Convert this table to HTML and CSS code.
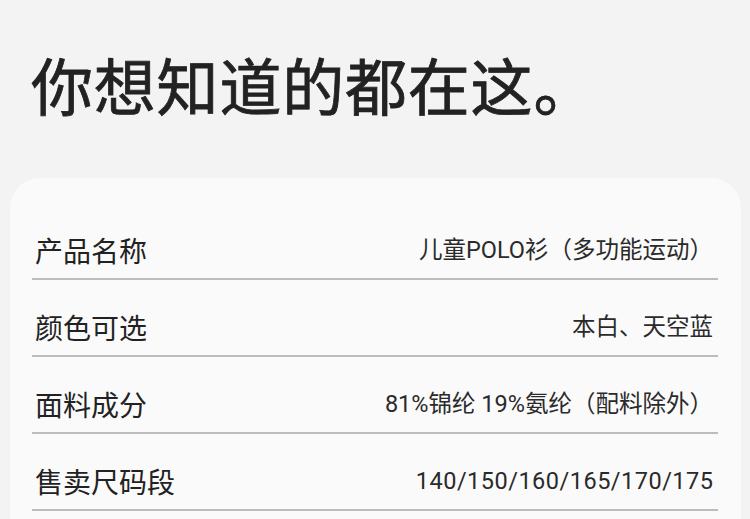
FILE: index.html
```html
<!DOCTYPE html>
<html lang="zh-CN">
<head>
<meta charset="utf-8">
<link rel="stylesheet" href="styles.css">
</head>
<body>
<main class="page">
  <h1 class="title">你想知道的都在这。</h1>
  <section class="card">
    <div class="row"><span class="label">产品名称</span><span class="value">儿童POLO衫（多功能运动）</span></div>
    <div class="row"><span class="label">颜色可选</span><span class="value">本白、天空蓝</span></div>
    <div class="row"><span class="label">面料成分</span><span class="value">81%锦纶 19%氨纶（配料除外）</span></div>
    <div class="row"><span class="label">售卖尺码段</span><span class="value value-num">140/150/160/165/170/175</span></div>
  </section>
</main>
</body>
</html>
```

FILE: styles.css
```css
html, body {
  margin: 0;
  padding: 0;
  background: #f3f3f3;
}
body {
  font-family: "Noto Sans", "Noto Sans CJK SC", sans-serif;
  color: #222;
  width: 750px;
  height: 519px;
  overflow: hidden;
}
.page {
  display: flex;
  flex-direction: column;
  height: 100%;
}
.title {
  margin: 53px 0 0 0;
  padding-left: 31px;
  font-family: "Noto Sans CJK SC", sans-serif;
  font-size: 62px;
  line-height: 62px;
  font-weight: 400;
  letter-spacing: 0.8px;
  color: #222;
  -webkit-text-stroke: 0.8px #222;
}
.card {
  flex: 1;
  margin: 63px 9px 0 10px;
  background: #fafafa;
  border-radius: 30px 30px 0 0;
  padding: 25px 23px 0 22px;
  display: flex;
  flex-direction: column;
}
.row {
  display: flex;
  justify-content: space-between;
  align-items: center;
  padding: 29px 0 9px;
  line-height: 37px;
  border-bottom: 2px solid #bcbcbc;
}
.label {
  font-family: "Noto Sans CJK SC", sans-serif;
  font-size: 28px;
  color: #222;
  padding-left: 3px;
}
.value {
  font-family: Roboto, "Noto Sans CJK SC", sans-serif;
  font-size: 23.5px;
  color: #2a2a2a;
  padding-right: 5px;
}
.value-num {
  letter-spacing: 0.5px;
  padding-right: 4.5px;
}
```
